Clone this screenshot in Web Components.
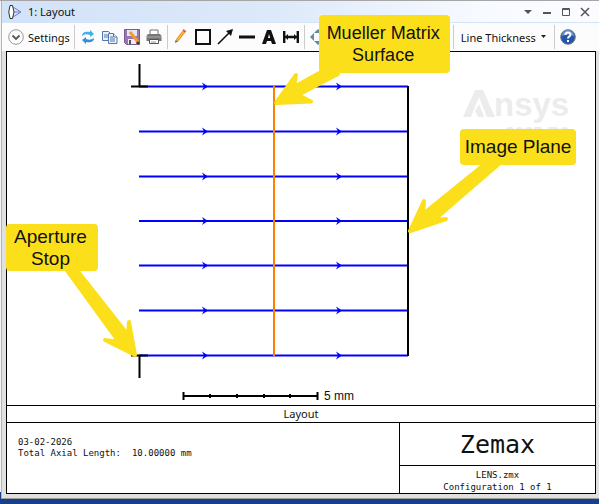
<!DOCTYPE html>
<html lang="en">
<head>
<meta charset="utf-8">
<title>1: Layout</title>
<style>
html, body { margin: 0; }
body { font-family: "Noto Sans", "Open Sans", sans-serif; font-size: 11px; color: #111; background: #fff; }
</style>
</head>
<body>
<layout-window></layout-window>

<template id="window-tpl">
<style>
:host { display: flex; flex-direction: column; min-height: 100vh; box-sizing: border-box; padding: 0 0 5px 1px; background: linear-gradient(#17408b, #17408b) bottom / 100% 12px no-repeat, #f4f4f4; border-top: 1px solid #a6a6a6; }
.win { border-left: 1px solid #b4b4b4; border-bottom: 1px solid #9c9c9c; background: #e0e0e0; }
.sheet { margin: 0 3px 4px 4px; border: 1px solid #000; background: #fff; }
title-bar, tool-bar { display: flex; }
</style>
<div class="win">
  <title-bar>1: Layout</title-bar>
  <tool-bar></tool-bar>
  <main class="sheet">
    <optical-layout></optical-layout>
    <title-block></title-block>
  </main>
</div>
</template>

<template id="title-tpl">
<style>
:host { align-items: center; height: 21px; padding: 0 5px 0 6px; background: linear-gradient(90deg, #d2e2f8, #dce9f9 45%, #f7faff 80%, #fcfcff); border-bottom: 1px solid #d3e4f8; }
.name { flex: 1; margin: 0 0 0 6px; font: 11px "Noto Sans", sans-serif; }
button { display: block; padding: 0; border: 0; background: none; width: 19px; height: 20px; }
svg { display: block; }
button svg { margin: auto; }
</style>
<svg width="14" height="18" viewBox="0 0 14 18" fill="none"><path d="M5 4 13 9 5 14M3 9h10" stroke="#7777d4"/><path d="M2 2.5h2.5q3 6.500 0 13H2q-2.500-6.500 0-13Z" fill="#fff" stroke="#333"/></svg>
<h1 class="name"><slot></slot></h1>
<button aria-label="Window menu"><svg width="12" height="12"><path d="M2 4h8L6 8Z" fill="#555"/></svg></button>
<button aria-label="Minimize"><svg width="12" height="12"><path d="M2 7h8" stroke="#555" stroke-width="2"/></svg></button>
<button aria-label="Maximize"><svg width="12" height="12"><path d="M2.500 2.500h7v7h-7ZM2 3.500h8" stroke="#555" fill="none"/></svg></button>
<button aria-label="Close"><svg width="12" height="12"><path d="m2 2 8 8m0-8-8 8" stroke="#555" stroke-width="1.500"/></svg></button>
</template>

<template id="tool-tpl">
<style>
:host { align-items: center; height: 28px; padding-left: 6px; background: #fcfcfc; }
button { display: flex; align-items: center; justify-content: center; flex: none; padding: 0; border: 0; background: none; color: inherit; font: 11px "Noto Sans", sans-serif; width: 22px; height: 24px; }
button.text { width: auto; gap: 4px; padding-right: 2px; }
button.drop { padding: 0 5px; gap: 5px; }
i { flex: none; width: 1px; height: 24px; margin: 0 2px; background: #ccc; }
.space { flex: 1; max-width: 122px; }
svg { display: block; flex: none; }
</style>
<button class="text"><svg width="16" height="16" viewBox="0 0 16 16" fill="none"><circle cx="8" cy="8" r="7.300" stroke="#999"/><path d="m4.500 6.500 3.500 3.500 3.500-3.500" stroke="#555" stroke-width="1.800"/></svg>Settings</button>
<i></i>
<button aria-label="Refresh"><svg width="14" height="16" viewBox="0 0 14 16"><path d="M1 7c0-4 4-5 8-4V1l4 4-4 3V6C6 5 4 5 1 7Z" fill="#3db2e6"/><path d="M13 9c0 4-4 5-8 4v2l-4-4 4-3v2c3 1 5 1 8-1Z" fill="#2d91d8"/></svg></button>
<button aria-label="Copy"><svg width="16" height="14" viewBox="0 0 16 14" stroke="#5378ad" fill="#e9f1fc"><path d="M.5 1.500h6l3 3v6h-9Z"/><path d="M2 5h4M2 7h4" /><path d="M6.500 3.500h5l3.500 3.500v6.500H6.500Z"/><path d="M8 7h3M8 9h5M8 11h5M11.500 3.500V7H15"/></svg></button>
<button aria-label="Save"><svg width="16" height="16" viewBox="0 0 16 16"><path d="M.5.5h15v15h-13l-2-2Z" fill="#9b75b4" stroke="#795e91"/><path d="M3 1h10v6H3Z" fill="#e7e5f5"/><path d="M4 10h8v5H4Z" fill="#eee"/><path d="M5 11h2v4H5Z" fill="#555"/><path d="m6 3 8 10" stroke="#f29c2d" stroke-width="3"/><path d="m13 13 2 2" stroke="#333" stroke-width="2"/></svg></button>
<button aria-label="Print"><svg width="16" height="16" viewBox="0 0 16 16"><path d="M4 1h8v5H4Z" fill="#fff" stroke="#777"/><path d="M2 5h12l1.500 2v5H.5V7Z" fill="#777"/><path d="M1 8h14" stroke="#aaa"/><path d="M3.500 10.500h9v4h-9Z" fill="#fff" stroke="#555"/><path d="M5 13h5" stroke="#79a96e"/></svg></button>
<i></i>
<button aria-label="Draw"><svg width="14" height="16" viewBox="0 0 14 16"><path d="m3 11.500 7-9" stroke="#ed941d" stroke-width="3"/><path d="m3 11.500 7-9" stroke="#ffca55"/><path d="m9.800 2.700 1.200-1.500" stroke="#df6055" stroke-width="3.500"/><path d="m1 14 .6-3.300 2.400 1.800Z" fill="#665"/></svg></button>
<button aria-label="Rectangle"><svg width="16" height="16"><path d="M1 1h14v14H1Z" fill="none" stroke="#111" stroke-width="2"/></svg></button>
<button aria-label="Arrow"><svg width="16" height="16"><path d="M1 15 12 4" stroke="#111" stroke-width="1.600"/><path d="M9 2 16 0l-2 7Z" fill="#111"/></svg></button>
<button aria-label="Line"><svg width="16" height="16"><path d="M0 8h16" stroke="#111" stroke-width="3"/></svg></button>
<button aria-label="Text"><svg width="14" height="14" viewBox="0 0 14 14"><path fill="#111" fill-rule="evenodd" d="M5 0h4l5 14h-4l-1-3H5l-1 3H0ZM6 8h2.200L7 4Z"/></svg></button>
<button aria-label="Dimension"><svg width="16" height="14" viewBox="0 0 16 14"><path d="M1.200 1v12M14.800 1v12M1 7h14" stroke="#111" stroke-width="2.400"/><path d="m2 7 3-3v6Zm12 0-3-3v6Z" fill="#111"/></svg></button>
<i></i>
<button aria-label="Pan"><svg width="16" height="16"><path d="m0 8 4-4v8Zm16 0-4-4v8ZM8 0l4 4H4Zm0 16 4-4H4Z" fill="#668aa0"/></svg></button>
<span class="space"></span>
<i></i>
<button class="text drop">Line Thickness<svg width="6" height="4"><path d="M0 0h5L2.500 3Z" fill="#222"/></svg></button>
<i></i>
<button aria-label="Help"><svg width="16" height="16" viewBox="0 0 16 16"><circle cx="8" cy="8" r="7.300" fill="#2456af" stroke="#777"/><path d="M2 7a6 6 0 0 1 12 0Q8 4 2 7" fill="#6d94d5"/><path d="M5.500 6c0-3.500 5-3.200 5-.5C10.500 7.500 8 7.500 8 9.500" fill="none" stroke="#fff" stroke-width="2"/><path d="M7 11h2v2H7Z" fill="#fff"/></svg></button>
</template>

<template id="layout-tpl">
<style>
:host { display: block; position: relative; }
svg { display: block; width: 100%; height: auto; overflow: visible; }
text { font-family: "Liberation Sans", Arial, sans-serif; }
note-label { position: absolute; }
.surface { left: 53%; top: -37px; padding: 7px 10px 7px 8px; }
.plane { left: 77%; top: 77px; padding: 7px 5px; }
.stop { left: -1px; top: 172px; padding: 2px 11px 1px 8px; }
.wide { --size: 19px; }
</style>
<svg viewBox="7 52 588 353" role="img" aria-label="Ray layout">
  <path d="M463 117 475 90h8l12 27h-8l-8-20-8 20ZM479 104l5 13h-6l-3-6Z" fill="#ececec"/>
  <text x="494" y="116" font-size="33" font-weight="bold" fill="#ececec">nsys</text>
  <text x="505" y="139" font-size="17" font-weight="bold" fill="#ececec">2025 R2</text>
  <g id="rays"></g>
  <path d="M274 86V356" stroke="#ff8000" stroke-width="2"/>
  <path d="M408 86V356" stroke="#000" stroke-width="2"/>
  <path d="M139.500 64V86M131 86.500h17M139.500 378V356M131 355.500h17" stroke="#000" stroke-width="2"/>
  <path d="M183 396H318" stroke="#000" stroke-width="2"/>
  <path d="M183.500 392v8M317.500 392v8M210 394v4M237 394v4M264 394v4M290 394v4" stroke="#000" stroke-width="2"/>
  <text x="324" y="400" font-size="12" fill="#111">5 mm</text>
  <g fill="#fbdf1b" stroke="#fbdf1b" stroke-linejoin="round" stroke-linecap="round" stroke-width="4">
    <path d="M276 103 296 75 294 87 321 72 338 74 298 95 311 101.500Z"/>
    <path d="M410 231 424 201 423 214 486 163 500 163 434 220 446 219Z"/>
    <path d="M135 355 105 340 119 342 66 269 76 269 128 335 129 322Z"/>
  </g>
</svg>
<note-label class="surface">Mueller Matrix<br>Surface</note-label>
<note-label class="plane wide">Image Plane</note-label>
<note-label class="stop wide">Aperture<br>Stop</note-label>
</template>

<template id="note-tpl">
<style>
:host { display: block; border-radius: 4px; background: #fbdf1b; color: #111; font: var(--size, 18px)/22px "Liberation Sans", Arial, sans-serif; text-align: center; white-space: nowrap; }
</style><slot></slot>
</template>

<template id="block-tpl">
<style>
:host { display: block; border-top: 1px solid #000; font: 9px/11px "DejaVu Sans Mono", monospace; }
.caption { height: 16px; border-bottom: 1px solid #000; text-align: center; font: 11px/16px "Noto Sans", sans-serif; }
.row { display: grid; grid-template-columns: 2fr 1fr; height: 70px; }
.data { padding: 14px 11px; }
.pair { display: flex; gap: 11px; }
.id { border-left: 1px solid #000; text-align: center; }
.brand { height: 42px; border-bottom: 1px solid #000; font-size: 25px; line-height: 43px; }
.file { padding-top: 3px; line-height: 12px; }
</style>
<div class="caption">Layout</div>
<div class="row">
  <div class="data"><div>03-02-2026</div><div class="pair"><span>Total Axial Length:</span><span>10.00000 mm</span></div></div>
  <div class="id"><div class="brand">Zemax</div><div class="file">LENS.zmx<br>Configuration 1 of 1</div></div>
</div>
</template>

<script>
function define(name, templateId, setup) {
  customElements.define(name, class extends HTMLElement {
    constructor() {
      super();
      const root = this.attachShadow({ mode: "open" });
      root.append(document.getElementById(templateId).content.cloneNode(true));
      if (setup) setup(root);
    }
  });
}
define("title-bar", "title-tpl");
define("tool-bar", "tool-tpl");
define("note-label", "note-tpl");
define("title-block", "block-tpl");
define("optical-layout", "layout-tpl", root => {
  let rays = "";
  for (const y of [86.5, 131.5, 176.5, 221, 265.5, 310.5, 355.5]) {
    rays += `<path d="M139 ${y}H408" stroke="#00f" stroke-width="2"/>`;
    for (const x of [207, 341]) rays += `<path d="M${x - 5} ${y - 4}L${x + 1} ${y}L${x - 5} ${y + 4}L${x - 3} ${y}Z" fill="#00f"/>`;
  }
  root.getElementById("rays").innerHTML = rays;
});
define("layout-window", "window-tpl");
</script>
</body>
</html>
